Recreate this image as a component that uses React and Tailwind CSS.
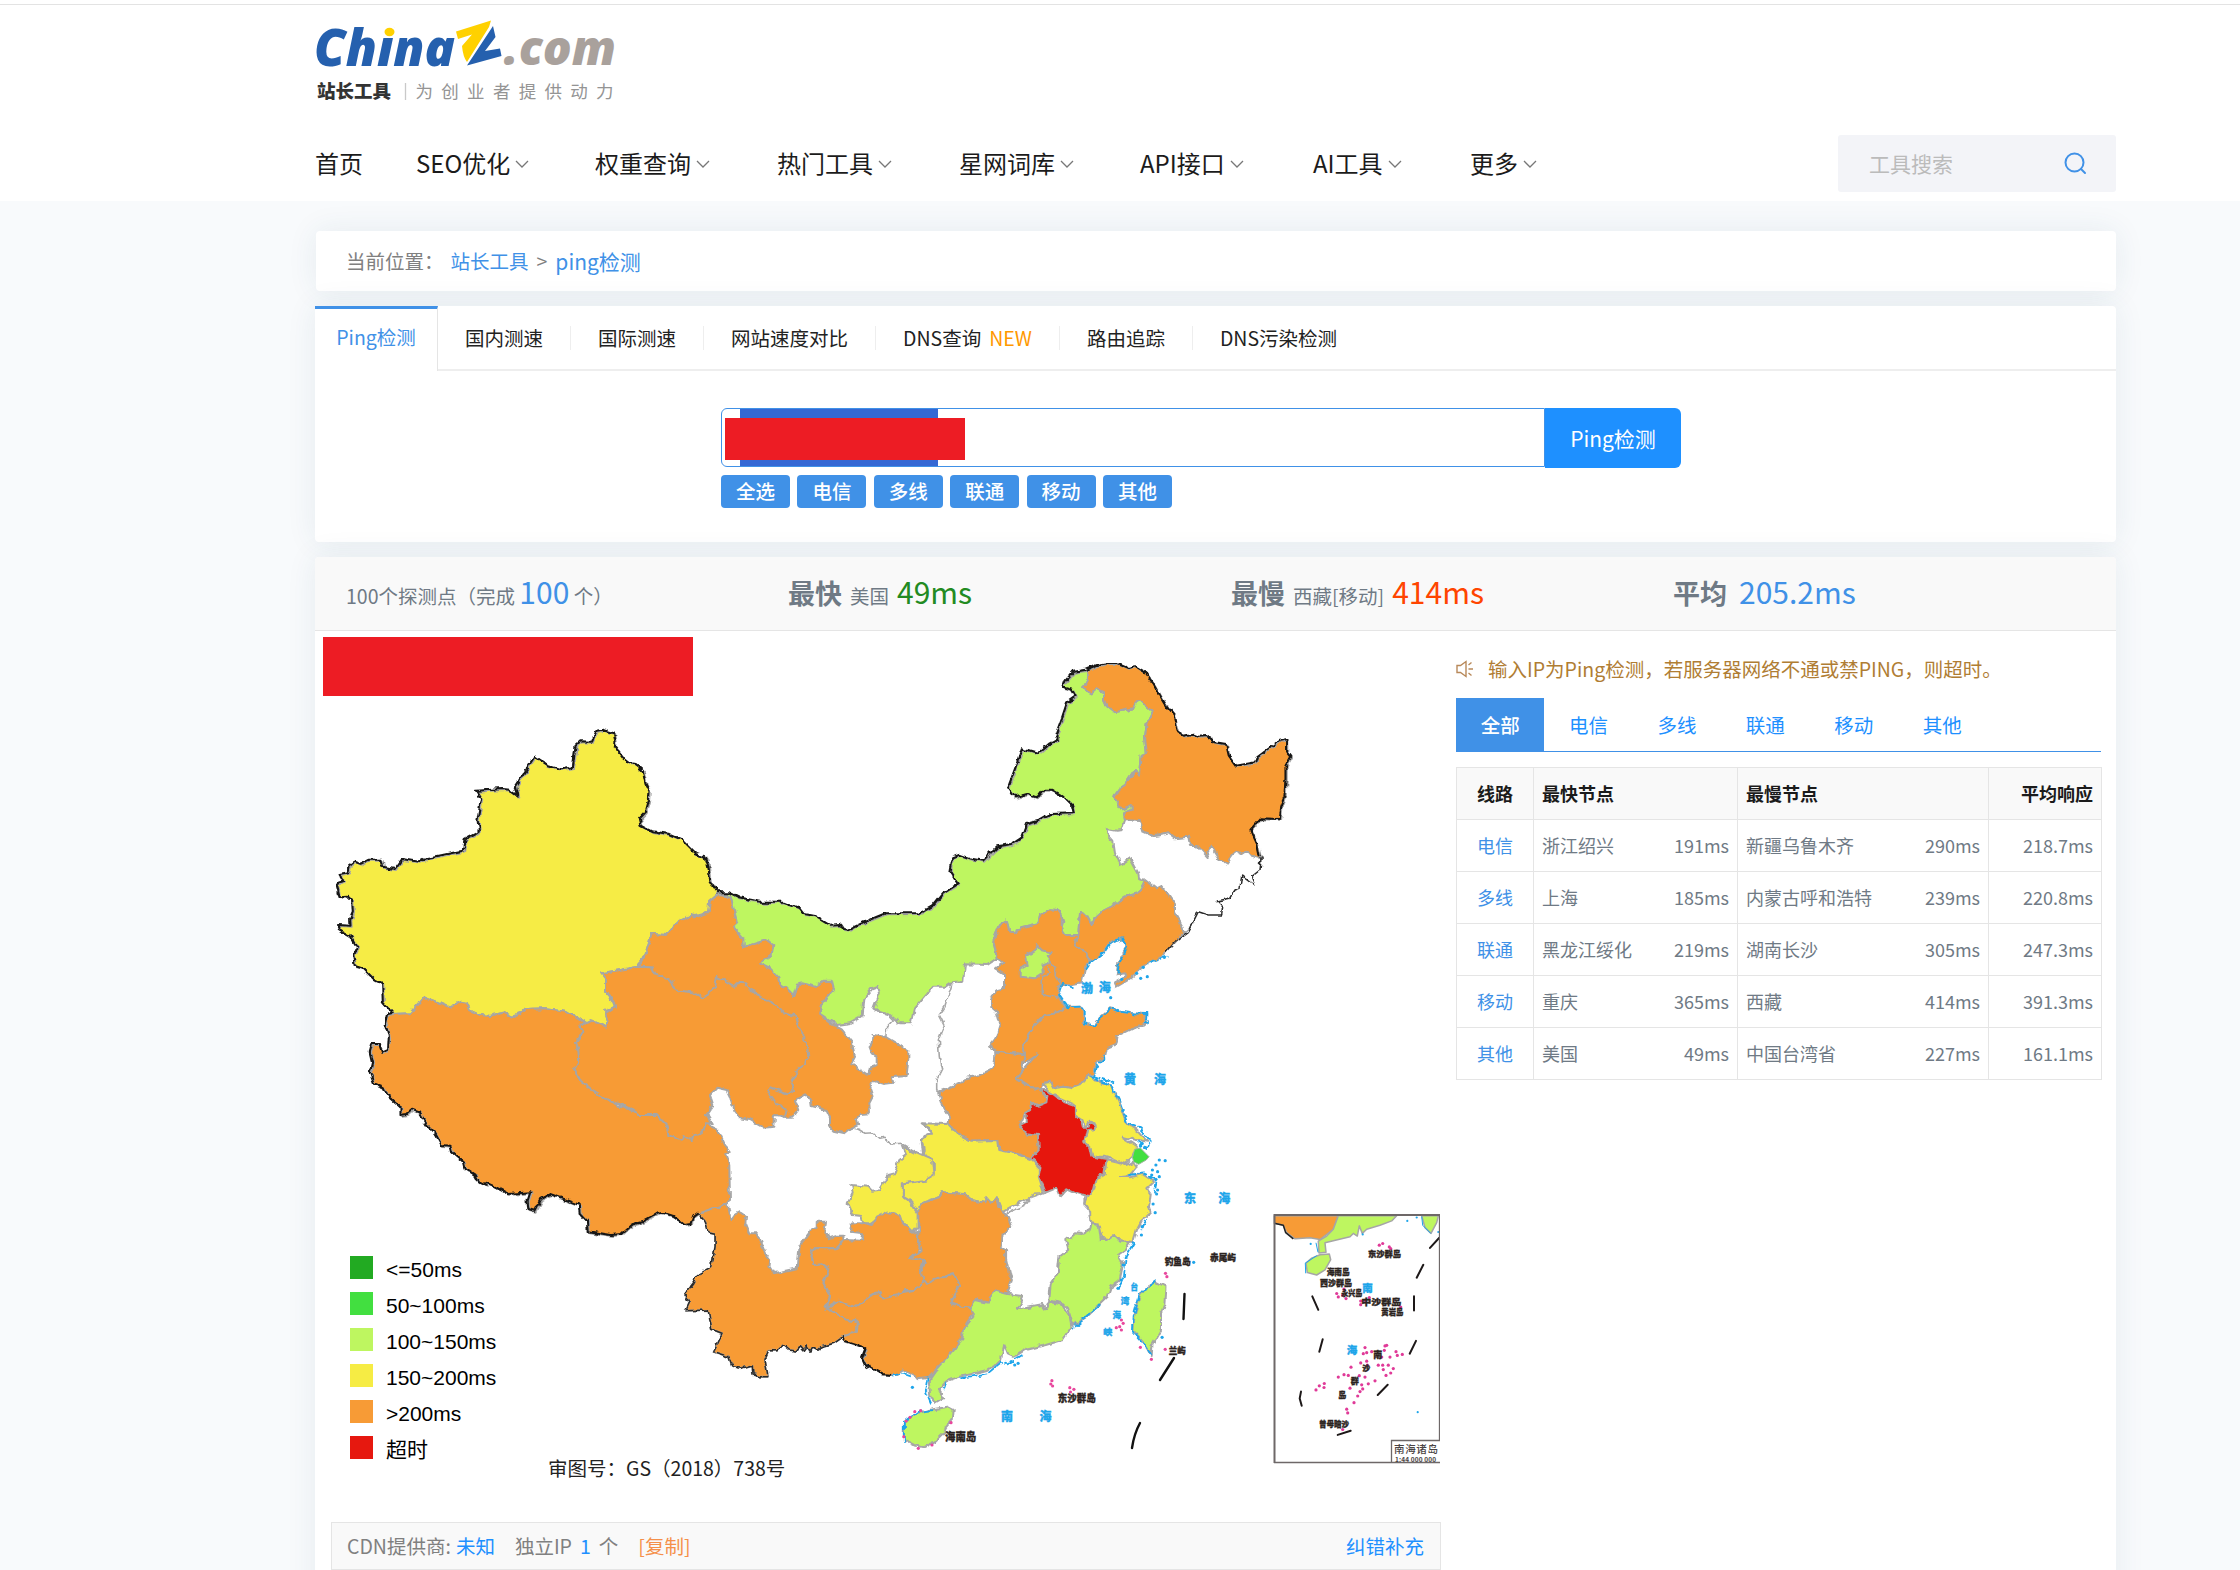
import React from "react";

/* ---------- map geometry ---------- */
// Each survey sheet: origin x, origin y, units per pixel in x and y.
const SHEETS = {
  A: [320, 700, 3, 3],
  B: [880, 640, 3, 3],
  C: [540, 860, 3, 3],
  D: [660, 1060, 2.904, 3],
  E: [320, 1180, 2.529, 3],
  F: [1120, 1040, 3, 2.958],
};
const at = (s, x, y) => {
  const [ox, oy, kx, ky] = SHEETS[s];
  return [+(ox + x / kx).toFixed(1), +(oy + y / ky).toFixed(1)];
};
const line = (...parts) => {
  const out = [];
  parts.forEach((p) => {
    const s = p[0];
    p.slice(1).trim().split(/\s+/).forEach((q) => {
      const [x, y] = q.split(",").map(Number);
      out.push(at(s, x, y).join(","));
    });
  });
  return out.join(" ");
};

const XJ_N = "A220,942 192,910 190,852 165,840 130,805 108,798 103,770 115,745 95,710 60,690 55,678 95,680 94,660 102,640 100,605 85,590 62,592 53,555 70,550 62,525 88,520 92,500 108,488 125,494 150,482 188,482 193,503 228,510 250,480 300,488 320,478 360,470 432,455 438,420 470,403 480,395 476,360 487,300 472,275 550,270 570,272 595,290 588,262 648,172 685,197 728,211 762,205 770,140 785,127 820,128 833,95 850,92 885,103 890,125 888,145 915,180 930,192 948,195 972,215 980,255 992,280 990,305 980,340 963,358 968,380 1000,397 1050,405 1085,420 1130,465 1160,475 1168,500 1175,548 1195,578";
const XJ_S = "A1167,602 1165,638 1128,648 1113,645 1075,668 1040,705 995,703 975,768 957,790 957,800 845,820 855,835 855,875 880,905 885,920 855,933 863,960 858,982 815,962 795,968";
const XJ_T = "A795,968 740,933 680,925 615,927 600,943 575,950 550,938 510,948 480,945 450,930 440,908 425,905 390,922 345,903 312,890 270,940 220,942";
const TB_TOP = "A220,942 270,940 312,890 345,903 390,922 425,905 440,908 450,930 480,945 510,948 550,938 575,950 600,943 615,927 680,925 740,933 795,968";
const TB_E = "A778,980 790,990 770,1020 772,1050 780,1053 778,1100 763,1103 775,1133 810,1165 860,1195 890,1217 915,1220 955,1245 1010,1245 1035,1270 1048,1305 1070,1310 1087,1320 1098,1300 1115,1320 1118,1298 1145,1300 1155,1270 1195,1290 1215,1335 1230,1355 1215,1360 1228,1395 1230,1500";
const TB_E2 = "D197,430 182,435 175,440 170,485 150,485 140,475 113,460";
const TB_S = ["D113,460 100,470 92,495 75,498 40,470 8,460", "E880,104 860,100 840,115 820,128 790,137 765,165 740,168 680,157 678,125 662,105 660,78 620,60 585,45 560,60 545,95 530,90 528,65 535,40 480,45 440,20 420,10", "A500,1460 480,1450 470,1430 440,1410 435,1390 400,1360 395,1340 368,1338 350,1305 325,1280 300,1240 280,1232 265,1245 245,1248 245,1225 205,1190 195,1165 165,1153 153,1120 160,1090 153,1060 160,1035 182,1035 190,1058 208,1050 210,1015 200,980 208,945 220,942"];
const YN_N = "D197,430 205,480 225,452 250,470 248,490 260,520 280,520 305,580 320,600 318,620 330,640 385,628 400,625 405,560 435,520 440,505 455,500 455,485 485,485 480,515 490,535 512,527 530,527 530,540";
const YN_GZ = "D530,540 515,565 445,565 440,590 445,612 470,610 490,625 475,670 495,705 480,745";
const YN_GX = "D480,745 520,760 545,780 575,785 572,815 530,832";
const YN_S = "D530,832 505,850 470,860 460,870 440,865 435,873 425,858 415,872 405,860 395,873 375,870 358,855 340,872 315,872 305,895 313,950 290,950 270,945 268,915 235,925 210,920 200,890 155,875 180,820 150,808 145,780 140,750 75,752 85,730 70,705 100,665 115,640 150,620 160,560 160,520 140,515 130,480 113,460";
const GX_S = "D530,832 540,845 570,855 600,868 590,895 600,918 650,945 672,947";
const IM_N = ["C535,100 570,100 600,115 665,128 735,128 783,147 797,165 825,170 870,197 905,195 915,210 930,212 985,185 1040,163 1145,162 1180,142 1210,105", "B237,735 212,695 220,655 240,647 270,658 312,665 355,622 400,615 430,595 445,555 480,545 515,525 585,523 580,500 550,470 520,452 490,452 472,475 445,465 408,475 388,445 410,385 430,328 478,342 510,315 540,298 530,288 550,235 565,190 590,172 580,152 553,145 560,125 583,98 620,92"];
const HL_W = "B620,98 625,115 610,145 635,160 650,147 672,158 672,178 685,205 700,217 760,205 770,183 780,183 818,215 800,250 795,290 800,338 785,345 780,410 765,390 735,435 720,445 700,472 725,508 755,496 755,508 732,520 735,538";
const HL_N = "B620,92 655,78 690,72 715,72 750,87 770,82 800,100 825,135 850,180 865,205 885,230 898,280 915,290 945,284 960,290 980,288 1010,310 1042,315 1050,350 1072,380 1130,370 1135,355 1175,325 1200,305 1225,300 1225,335 1237,350 1220,380 1220,420 1217,470 1205,500 1200,540 1145,538 1115,572 1135,615 1143,655";
const HL_S = "B1143,658 1115,650 1100,632 1085,642 1072,635 1060,645 1040,672 1020,660 995,620 980,648 950,615 930,615 925,590 885,595 865,580 845,585 820,588 790,575 780,540 735,538";
const JL_W = "B735,540 725,570 710,572 680,567 682,585 700,605 705,640 722,675 750,655 775,700 778,718 790,722";
const JL_E = "B1143,655 1140,690 1115,710 1125,735 1085,705 1080,745 1065,750 1050,775 1012,783 1028,800 1025,825 985,825 955,815 940,845 922,878 885,905 860,935";
const LN_N = "B795,720 790,735 775,760 735,770 705,795 665,815 650,828 635,852 620,825 600,815 595,885";
const HB_N = "B595,885 555,885 545,860 550,845 545,830 530,810 510,808 480,825 475,850 430,860 400,880 388,878 380,842 360,855 345,890 342,915 350,955";
const IM_S = ["B350,955 325,972 255,970 250,1022 212,1028 195,1040 160,1040 105,1105 95,1150 60,1150 30,1125 0,1115", "C1003,445 1020,400 1013,378 995,385 970,415 965,470 930,490 890,495 838,460 845,430 882,390 875,362 850,362 825,380 790,370 770,375 760,405 740,385 722,380 718,355 690,325 660,310 695,285 700,255 680,240 640,252 612,260 610,235 580,200 592,190 572,110"];

const OR = "#f79b36", YE = "#f6ec44", LG = "#bef660", RED = "#e6180f", GR = "#42df40";

const REGIONS = [
  [YE, line(XJ_N, XJ_S, XJ_T)],
  [OR, line(TB_TOP, TB_E, TB_E2, ...TB_S)],
  [OR, line("C297,318 315,290 335,222 380,225 415,185 455,165 465,172 505,158 510,122 535,105 572,110 592,190 580,200 610,235 612,260 640,250 680,240 700,255 695,285 660,310 690,325 718,355 722,380 740,385 760,405 770,375 790,370 825,380 850,362 875,362 882,390 845,430 838,462 880,495 905,508 935,545 945,590 933,612 985,645 990,622 1010,615 1010,590 995,580 988,562 998,550 1000,525 1035,530 1105,572 1105,600 1100,648 1055,652 1060,668 1030,672 1000,662 988,680 998,710 988,730 990,760 960,762 950,775 955,795 935,803 915,820 880,812 870,800 870,770 860,750 815,738 812,718 798,703 765,722 775,750 760,770 735,770")],
  [OR, line("C183,340 250,328 297,320 335,322 345,343 370,350 395,365 405,388 440,395 465,398 487,412 505,400 525,385 530,350 560,365 583,380 595,368 615,370 650,405 680,420 710,435 730,460 765,468 775,500 790,515 790,545 800,550 805,590 795,600 793,615 770,630 770,640 752,660 765,690 740,703 690,685 685,700 710,735 740,750 735,770 705,765 703,800 670,803 650,792 630,780 600,775 580,750 570,710 560,690 530,683 510,705 520,735 500,765 515,790 495,790 485,820 460,822 455,840 430,825 425,843 385,825 380,795 350,765 295,765 265,742 215,725 150,685 120,660 103,625 118,610 115,570 108,545 130,515 118,495 135,488 150,480 200,500 203,480 195,460 225,440 215,415 195,395 195,355")],
  [LG, line(...IM_N, HL_W, JL_W, LN_N, HB_N, ...IM_S)],
  [OR, line(HL_N, HL_S, HL_W.split(" ").reverse().map((v, i, a) => (i === 0 ? "B" + v : v.replace("B", ""))).join(" "))],
  [OR, line("B595,885 600,815 620,825 635,852 650,828 665,815 705,795 735,770 775,760 790,735 795,718 830,745 845,738 885,795 885,820 908,860 910,880 860,935 845,950 800,970 745,1020 710,1040 705,1030 740,1010 735,1000 710,1003 715,970 742,920 728,895 690,905 670,935 632,965 620,935 583,920")],
  [OR, line("B345,890 360,855 380,842 388,878 400,880 430,860 475,850 480,825 510,808 530,810 545,830 545,860 555,885 595,885 583,920 620,935 632,965 615,985 605,1030 575,1035 540,1035 535,1065 555,1100 530,1120 495,1125 460,1160 450,1180 430,1215 435,1243 343,1235 333,1215 345,1200 360,1150 350,1115 333,1100 333,1080 345,1052 372,1045 372,1000 348,985 370,968 350,950 342,915")],
  [OR, line("D808,95 880,65 885,55 920,48 965,25 970,0", "B343,1235 435,1243 425,1290 408,1315", "D1034,55 1080,85 1105,85 1115,105 1128,120 1125,130 1100,140 1075,125 1078,150 1060,160 1045,195 1065,220 1098,225 1100,270 1078,295 1030,280 985,270 982,240 900,242 860,220 838,190 840,170 815,125")],
  [OR, line("B435,1243 430,1215 450,1180 460,1160 495,1125 530,1120 555,1100 600,1100 612,1115 612,1150 640,1158 655,1135 690,1105 720,1115 760,1120 797,1122 795,1155 760,1165 710,1190 705,1215 680,1225 675,1250 650,1270 640,1305", "D1245,45 1220,75 1195,85 1170,80 1145,88 1130,65 1113,70 1105,85 1080,85 1034,55", "B408,1315 470,1243 430,1270")],
  [LG, line("B470,915 485,930 512,937 500,950 512,965 487,975 488,1000 465,1015 422,1010 422,985 440,975 435,950 460,935")],
  [YE, line("D1113,70 1135,65 1145,85 1170,80 1195,85 1220,75 1245,45 1265,60 1310,80 1330,120 1355,190 1390,215 1415,245 1385,240 1340,230 1385,260 1372,290 1350,312 1320,300 1290,290 1255,290 1250,265 1230,250 1240,210 1265,205 1262,190 1245,185 1235,200 1225,180 1203,165 1205,135 1165,115 1130,95")],
  [YE, line("D1297,300 1330,308 1350,315 1375,305 1385,320 1365,345 1340,348 1365,352 1400,342 1435,365 1415,385 1425,400 1420,440 1425,460 1400,480 1385,510 1375,545 1340,545 1320,525 1300,540 1283,535 1270,490 1250,485 1245,450 1232,430 1240,410 1265,355 1290,345")],
  [YE, line("D760,190 838,192 860,220 900,242 982,240 985,270 1030,280 1075,297 1100,320 1100,350 1115,400 1060,420 1020,440 995,455 978,412 965,430 950,412 945,430 905,420 880,402 820,397 805,415 760,430 745,460 730,425 705,410 705,370 770,362 795,340 795,310 765,290 760,245 768,228 790,222 780,205")],
  [YE, line("D705,258 745,280 790,300 795,345 770,360 705,370 705,410 720,420 748,460 748,500 735,518 700,485 690,465 660,455 630,475 610,490 590,490 585,468 560,465 545,430 560,400 555,375 605,380 615,392 635,390 660,348 680,343 695,300 715,285")],
  [RED, line("D1105,85 1130,95 1145,105 1175,130 1205,140 1205,165 1220,180 1225,200 1245,200 1248,185 1265,195 1265,208 1240,210 1232,245 1250,265 1255,290 1297,297 1290,345 1270,350 1260,390 1235,410 1205,400 1180,388 1160,410 1150,385 1120,398 1100,345 1105,320 1078,295 1100,270 1098,225 1065,220 1045,195 1065,185 1065,160 1078,150 1075,125 1100,140 1125,130 1128,105 1115,105")],
  [OR, line(YN_N, YN_GZ, YN_GX, YN_S)],
  [OR, line("D485,745 520,722 570,740 620,700 640,695 650,715 690,700 735,690 765,665 800,655 855,640 870,675 845,735 905,742 910,760 890,790 875,840 850,880 800,930 780,950 750,955 710,930 690,945 650,945 600,918 590,895 600,868 570,855 540,845 525,832 572,815 575,785 545,780")],
  [OR, line("D530,540 587,542 590,520 555,515 560,490 590,490 615,495 630,470 660,455 695,465 700,480 735,518 748,515 750,550 760,555 750,575 730,595 765,600 760,625 765,660 755,680 735,690 715,690 690,705 650,715 640,695 620,700 570,740 520,722 485,745 495,705 475,670 490,625 470,610 445,612 440,590 445,565 515,565")],
  [OR, line("D750,440 770,425 815,410 820,397 850,400 885,402 905,420 945,430 950,412 965,430 978,412 985,440 1005,460 1020,500 995,525 992,560 1005,570 1005,600 1015,645 1022,660 1010,700 975,692 955,730 920,718 905,742 875,740 845,730 870,675 855,640 830,650 800,655 780,670 765,665 760,625 767,600 730,595 760,570 750,540")],
  [LG, line("D905,742 912,720 955,728 958,712 975,692 1010,702 1055,708 1035,750 1110,735 1120,748 1130,725 1170,735 1190,770 1195,800 1170,840 1120,855 1060,870 1030,890 1010,880 1000,855 990,900 975,915 950,930 870,950 830,965 810,990 825,1015 800,1030 785,1010 780,960 800,930 835,890 875,840 880,810 910,770")],
  [LG, line("D1265,490 1275,500 1280,540 1300,540 1320,525 1340,545 1365,545 1350,570 1330,585 1345,610 1335,660 1310,680 1300,710 1270,740 1240,770 1200,795 1185,745 1170,730 1130,722 1135,670 1155,640 1160,590 1185,570 1180,540 1205,520 1225,522 1250,505 1253,490")],
  [LG, line("D708,1090 745,1060 780,1050 835,1040 853,1050 850,1080 830,1105 825,1120 800,1145 765,1162 735,1155 708,1140")],
  [LG, line("D1440,665 1468,680 1465,730 1455,760 1455,810 1430,855 1428,888 1410,855 1375,815 1378,765 1395,705 1415,680")],
];

const GREY_LINES = [
  line("C1235,372 1215,440 1198,465 1213,495 1195,540 1198,590 1205,630 1190,660 1190,693 1200,697"),
  line("C1003,445 1020,458 1040,460 1060,480 1040,500 1037,535"),
  line("C935,803 955,808 975,820 1000,818 1020,835 1035,832 1055,852 1085,850 1115,868 1145,885 1152,870 1145,840 1160,825 1180,825 1170,805 1145,790"),
  line("B512,965 528,985 525,1005 542,1030 540,1050 530,1072 487,1060 487,1010 507,1003 505,975"),
  line("B350,955 370,968"),
  line("D1005,460 1060,435 1085,400 1115,398"),
  line("D1232,410 1232,435 1250,455 1250,490"),
  line("B910,880 945,845"),
  line("C498,0 510,15 515,65 535,100"),
];
const BLACK_LINES = [line(XJ_N), line(...TB_S), line(GX_S), line(...IM_N), line(HL_N)];
const BLACK_THIN = [line(JL_E), line(YN_S)];
const COAST = [
  line("B860,950 820,960 800,972"),
  line("B710,1000 715,970 742,920 728,895 690,905 670,935 632,965 615,990"),
  line("B578,1045 545,1032 535,1065 560,1102 600,1100 612,1115 612,1150 640,1158 655,1135 690,1105 720,1115 760,1120 797,1122 795,1150"),
  line("B675,1250 650,1275 640,1308 700,1330"),
  line("D1250,50 1310,80 1330,120 1355,190 1390,205 1420,240 1412,265 1385,245"),
  line("D1355,345 1400,340 1440,360 1435,400"),
  line("D1410,480 1395,510"),
  line("D1375,545 1350,590 1345,650 1325,685"),
  line("D1270,740 1240,765 1195,805"),
  line("D1050,885 1010,910 990,905 950,940 870,955"),
  line("D775,950 768,990 785,1030"),
  line("D672,947 700,940 730,950"),
  line("D830,965 820,992"),
  line("D706,1145 706,1088 745,1056 790,1050"),
  line("D1438,663 1412,682 1390,705 1373,768 1371,815 1410,860 1425,885"),
];
const BLUE_DOTS = "D1450,300 D1467,302 D1440,315 D1430,330 D1445,335 D1428,345 D1450,350 D1440,358 D1425,352 D1445,390 D1442,402 D1432,432 D1438,458 D1400,500 D1398,525 D1395,258 D1408,262 D1400,250 D1345,615 D1340,660 D1330,685 D1275,735 D1030,915 D1040,910 D1020,905 D733,982 D1550,607 D1458,832 B853,952 B790,982 B770,1000 B782,1015 B802,1010 B692,1073 B725,1018".split(" ");
const PINK_DOTS = "D715,1083 D726,1072 D740,1055 D757,1052 D708,1130 D750,1165 D790,1155 D845,1088 D1138,962 D1135,972 D1140,978 D1190,983 D1202,988 D1192,996 D1468,640 D1472,650 D1340,780 D1345,790 D1335,800 D1325,803 D1340,810 D1395,862 D1427,898 D1467,868".split(" ");
const INSET_PINK = "778,607 788,602 808,612 812,617 650,750 655,760 672,737 668,755 678,765 722,772 735,770 722,783 748,762 842,790 795,905 800,903 793,918 735,910 740,925 730,928 755,922 785,938 810,938 828,922 832,933 847,930 775,962 788,962 805,962 820,972 790,975 812,985 798,992 740,950 742,962 722,955 693,968 672,990 655,997 685,992 718,993 735,997 745,1017 765,1008 725,1020 690,1030 720,1040 713,1053 702,1073 680,1092 683,1103 728,1032 588,1035 598,1023 613,1016 612,1028 668,1152".split(" ");
const INSET_DASH = ["577,758 595,798", "608,885 598,922", "543,1040 539,1060 545,1082", "910,665 890,703", "882,758 882,800", "888,890 869,928", "803,1020 773,1050", "653,1168 692,1156", "958,585 930,615"];

const parseDot = (d) => at(d[0], ...d.slice(1).split(",").map(Number));

function Label({ s, x, y, w, size = 10, fill = "#2b2320", children }) {
  const [px, py] = at(s, x, y);
  return (
    <text x={px} y={py + size * 0.36} fontSize={size} fontWeight="900" fill={fill} stroke={fill} strokeWidth="0.35"
      textLength={w} lengthAdjust="spacingAndGlyphs" fontFamily='"Noto Sans CJK SC", sans-serif'>
      {children}
    </text>
  );
}

const BLUE = "#1ea5ea";

function ChinaMap() {
  return (
    <svg className="block h-[884px] w-[1125px]" viewBox="316 631 1125 884">
      <defs>
        <filter id="rough" x="0" y="0" width="100%" height="100%">
          <feTurbulence type="fractalNoise" baseFrequency="0.13" numOctaves="2" seed="4" result="n" />
          <feDisplacementMap in="SourceGraphic" in2="n" scale="6" xChannelSelector="R" yChannelSelector="G" />
        </filter>
        <clipPath id="inset"><rect x="1273" y="1214" width="167" height="250" /></clipPath>
      </defs>
      <g filter="url(#rough)" strokeLinejoin="round" fill="none">
        {REGIONS.map(([c, p], i) => <polygon key={i} points={p} fill={c} stroke="#a6a6a6" strokeWidth="2" />)}
        {GREY_LINES.map((p, i) => <polyline key={i} points={p} stroke="#a6a6a6" strokeWidth="1.6" />)}
        <g stroke="#141414" strokeWidth="2.1" transform="translate(-1.2 -1)">
          {BLACK_LINES.map((p, i) => <polyline key={i} points={p} />)}
        </g>
        <g stroke="#2c2c2c" strokeWidth="1.5">
          {BLACK_THIN.map((p, i) => <polyline key={i} points={p} />)}
        </g>
        <g stroke={BLUE} strokeWidth="1.8" strokeDasharray="9 1.5" transform="translate(0.8 0)">
          {COAST.map((p, i) => <polyline key={i} points={p} />)}
        </g>
      </g>
      <polygon points={line("D1372,292 1378,268 1395,264 1420,290 1412,300 1390,313 1375,305")} fill={GR} stroke="#9fb59f" strokeWidth="1" />
      {BLUE_DOTS.map((d, i) => { const [x, y] = parseDot(d); return <circle key={i} cx={x} cy={y} r="1.6" fill={BLUE} />; })}
      {PINK_DOTS.map((d, i) => { const [x, y] = parseDot(d); return <circle key={i} cx={x} cy={y} r="1.6" fill="#e8479d" />; })}
      <g stroke="#111" strokeWidth="2.4" strokeLinecap="round">
        <path d="M1184.500 1294L1183.500 1319M1174 1358L1160 1380M1140 1423Q1134 1434 1132 1448" fill="none" />
      </g>
      <Label s="B" x={603} y={1045} size={12} w={12} fill={BLUE}>渤</Label>
      <Label s="B" x={656} y={1043} size={12} w={12} fill={BLUE}>海</Label>
      <Label s="F" x={12} y={117} size={12} w={12} fill={BLUE}>黄</Label>
      <Label s="F" x={102} y={117} size={12} w={12} fill={BLUE}>海</Label>
      <Label s="F" x={192} y={468} size={12} w={12} fill={BLUE}>东</Label>
      <Label s="F" x={295} y={468} size={12} w={12} fill={BLUE}>海</Label>
      <Label s="D" x={990} y={1071} size={12} w={12} fill={BLUE}>南</Label>
      <Label s="D" x={1102} y={1071} size={12} w={12} fill={BLUE}>海</Label>
      <Label s="D" x={1366} y={683} size={7.5} w={7.5} fill={BLUE}>台</Label>
      <Label s="D" x={1338} y={722} size={8} w={8.5} fill={BLUE}>湾</Label>
      <Label s="D" x={1314} y={765} size={8} w={8.5} fill={BLUE}>海</Label>
      <Label s="D" x={1287} y={817} size={8} w={9} fill={BLUE}>峡</Label>
      <Label s="F" x={134} y={656} size={9} w={26}>钓鱼岛</Label>
      <Label s="F" x={270} y={645} size={9} w={26}>赤尾屿</Label>
      <Label s="F" x={146} y={920} size={9} w={17}>兰屿</Label>
      <Label s="D" x={1155} y={1016} size={10} w={38}>东沙群岛</Label>
      <Label s="D" x={828} y={1130} size={11} w={31}>海南岛</Label>

      <g clipPath="url(#inset)">
        <g strokeLinejoin="round">
          <polygon points={line("F463,520 655,520 640,560 600,590 570,585 525,588 500,570 490,548 463,542")} fill={OR} stroke="#a6a6a6" strokeWidth="1.5" />
          <polyline points={line("F463,542 490,548 497,570 520,588")} fill="none" stroke="#222" strokeWidth="1.5" />
          <polygon points={line("F655,520 830,520 815,535 780,548 740,560 727,572 718,550 712,580 700,572 690,582 615,600 618,628 597,630 595,595 620,580 640,560")} fill={LG} stroke="#a6a6a6" strokeWidth="1.5" />
          <polygon points={line("F558,660 575,645 600,635 628,633 632,650 615,680 590,695 562,688")} fill={LG} stroke="#a6a6a6" strokeWidth="1.5" />
          <polyline points={line("F557,690 556,660 590,638")} fill="none" stroke={BLUE} strokeWidth="1" />
          <polyline points={line("F594,628 588,600")} fill="none" stroke={BLUE} strokeWidth="1" />
          <polygon points={line("F905,520 955,520 950,540 933,572 915,555")} fill={LG} stroke="#a6a6a6" strokeWidth="1.5" />
          <polyline points={line("F905,522 908,548 932,572")} fill="none" stroke={BLUE} strokeWidth="1" />
        </g>
        {["572,603", "728,575", "890,525", "955,568", "893,1101", "862,535"].map((d, i) => { const [x, y] = parseDot("F" + d); return <circle key={i} cx={x} cy={y} r="1.1" fill={BLUE} />; })}
        {INSET_DASH.map((d, i) => <polyline key={i} points={line("F" + d)} fill="none" stroke="#1d1818" strokeWidth="2" strokeLinecap="round" />)}
        {INSET_PINK.map((d, i) => { const [x, y] = parseDot("F" + d); return <circle key={i} cx={x} cy={y} r="1.6" fill="#e03a98" />; })}
        <Label s="F" x={744} y={632} size={8.5} w={33}>东沙群岛</Label>
        <Label s="F" x={620} y={686} size={8} w={23}>海南岛</Label>
        <Label s="F" x={600} y={720} size={8.5} w={32}>西沙群岛</Label>
        <Label s="F" x={664} y={748} size={8} w={21}>永兴岛</Label>
        <Label s="F" x={724} y={776} size={8.5} w={40}>中沙群岛</Label>
        <Label s="F" x={784} y={806} size={8} w={22}>黄岩岛</Label>
        <Label s="F" x={727} y={735} size={10.5} w={10.5} fill={BLUE}>南</Label>
        <Label s="F" x={680} y={919} size={10.5} w={10.5} fill={BLUE}>海</Label>
        <Label s="F" x={760} y={932} size={9} w={9}>南</Label>
        <Label s="F" x={727} y={971} size={8} w={8}>沙</Label>
        <Label s="F" x={692} y={1010} size={8} w={8}>群</Label>
        <Label s="F" x={655} y={1050} size={8} w={8}>岛</Label>
        <Label s="F" x={597} y={1136} size={8} w={30}>曾母暗沙</Label>
        <path d="M1274.500 1463V1215H1440" fill="none" stroke="#6e6868" strokeWidth="2" />
        <path d="M1274 1462.500H1440M1391.500 1462V1440.500H1440M1439.500 1215V1440" fill="none" stroke="#6e6868" strokeWidth="1.3" />
        <g fontFamily='"Noto Sans CJK SC", sans-serif' fill="#4a4444">
          <text x="1394" y="1453" fontSize="10.5" fontWeight="500" textLength="44">南海诸岛</text>
          <text x="1395" y="1461.500" fontSize="6.5" fontWeight="700" textLength="41">1:44 000 000</text>
        </g>
      </g>
    </svg>
  );
}

/* ---------- page pieces ---------- */
function Logo() {
  return (
    <svg className="block h-[92px] w-[320px] overflow-visible" viewBox="310 14 320 92">
      <g fontFamily='"Open Sans", sans-serif' fontStyle="italic" fontWeight="800">
        <text x="314" y="66" fontSize="51" fill="#2560ae" textLength="141" lengthAdjust="spacingAndGlyphs">China</text>
        <text x="504" y="65" fontSize="48" fontWeight="800" fill="#a9a19c" textLength="112" lengthAdjust="spacingAndGlyphs">.com</text>
      </g>
      <circle cx="389.500" cy="31" r="6.500" fill="#fff" />
      <ellipse cx="389.500" cy="32" rx="5" ry="4.200" fill="#ffd100" />
      <path d="M456 31.500L491 20.500L489 27L467 62Q463 57 462 46L472 34.500L458 39Z" fill="#ffd100" />
      <path d="M493 26L495.500 37L485 51L500 48.500L501.500 56L467 65.500Z" fill="#2560ae" />
      <g fontFamily='"Noto Sans CJK SC", sans-serif'>
        <text x="317" y="98" fontSize="18.500" fontWeight="900" fill="#333" textLength="74" lengthAdjust="spacingAndGlyphs">站长工具</text>
        <g fontSize="17.500" fill="#949494">
          {"为创业者提供动力".split("").map((c, i) => <text key={i} x={415.5 + i * 25.8} y="98">{c}</text>)}
        </g>
      </g>
      <path d="M405.500 83V100" stroke="#c9c9c9" strokeWidth="1.300" />
    </svg>
  );
}

function Chevron() {
  return (
    <svg className="ml-[5px] mt-[2px] h-3 w-[14px]" viewBox="0 0 14 12" fill="none" stroke="#777" strokeWidth="1.300">
      <path d="M1 3L7 9L13 3" />
    </svg>
  );
}

const NAV = [
  ["首页", "w-[101px]", false],
  ["SEO优化", "w-[179px]", true],
  ["权重查询", "w-[182px]", true],
  ["热门工具", "w-[182px]", true],
  ["星网词库", "w-[181px]", true],
  ["API接口", "w-[173px]", true],
  ["AI工具", "w-[157px]", true],
  ["更多", "w-[100px]", true],
];

const ROWS = [
  ["电信", "浙江绍兴", "191ms", "新疆乌鲁木齐", "290ms", "218.7ms"],
  ["多线", "上海", "185ms", "内蒙古呼和浩特", "239ms", "220.8ms"],
  ["联通", "黑龙江绥化", "219ms", "湖南长沙", "305ms", "247.3ms"],
  ["移动", "重庆", "365ms", "西藏", "414ms", "391.3ms"],
  ["其他", "美国", "49ms", "中国台湾省", "227ms", "161.1ms"],
];

const LEGEND = [
  ["bg-[#22aa22]", "<=50ms"],
  ["bg-[#42df40]", "50~100ms"],
  ["bg-[#bef660]", "100~150ms"],
  ["bg-[#f6ec44]", "150~200ms"],
  ["bg-[#f79b36]", ">200ms"],
  ["bg-[#e6180f]", "超时"],
];

const SHADOW = "shadow-[0_0_30px_rgba(30,80,110,0.085)]";

export default function App() {
  return (
    <div className="h-[1570px] w-[2240px] overflow-hidden bg-[#f8fafc] font-['Noto_Sans_CJK_SC',sans-serif] text-[19.5px] leading-none text-[#222]">
      <header className="h-[201px] bg-white pt-1">
        <div className="h-px bg-[#e3e3e3]" />
        <div className="ml-[310px] mt-[9px]"><Logo /></div>
        <div className="ml-[314px] mt-[29px] flex h-[57px] w-[1802px] items-center pl-px">
          <nav className="flex flex-1 items-center pb-px text-2xl leading-none text-[#1b1b1b]">
            {NAV.map(([t, w, c]) => (
              <div key={t} className={"flex items-center whitespace-nowrap " + w}>{t}{c && <Chevron />}</div>
            ))}
          </nav>
          <div className="flex h-[57px] w-[278px] items-center justify-between rounded-[3px] bg-[#f3f4f8] pb-px pl-[31px] pr-[29px] text-[21px] text-[#bbb]">
            <span>工具搜索</span>
            <svg className="h-[23px] w-[23px]" viewBox="0 0 23 23" fill="none" stroke="#4091e7" strokeWidth="2" strokeLinecap="round">
              <circle cx="10.500" cy="10.500" r="9" /><path d="M17 17L21 21" />
            </svg>
          </div>
        </div>
      </header>

      <main className="ml-[315px] flex w-[1800px] flex-col gap-[15px] pt-[30px]">
        <div className={"mr-[-1px] ml-px flex h-[60px] items-center rounded bg-white pl-[30px] text-[#808080] " + SHADOW}>
          <span>当前位置：</span>
          <span className="ml-[7px] text-[#4091e7]">站长工具</span>
          <span className="mx-2">&gt;</span>
          <span className="text-[21px] text-[#4091e7]">ping检测</span>
        </div>

        <section className={"mr-[-1px] h-[236px] rounded bg-white " + SHADOW}>
          <div className="flex h-[65px]">
            <div className="flex w-[123px] items-center justify-center border-r border-t-[3px] border-r-[#e5e5e5] border-t-[#4091e7] pb-[7px] text-[#4091e7]">Ping检测</div>
            <div className="flex flex-1 items-center border-b-2 border-[#eeeeee] pt-px">
              {["国内测速", "国际测速", "网站速度对比", "DNS查询", "路由追踪", "DNS污染检测"].map((t, i) => (
                <div key={t} className={"flex h-6 items-center whitespace-nowrap px-[27px] " + (i < 5 ? "border-r border-[#eee]" : "")}>
                  {t}{t === "DNS查询" && <span className="ml-2 text-[#ff9800]">NEW</span>}
                </div>
              ))}
            </div>
          </div>
          <div className="ml-[406px] mt-[37px] flex h-[60px] w-[960px]">
            <div className="relative h-[59px] flex-1 rounded-l-md border border-[#4091e7] bg-white">
              <div className="absolute left-[18px] top-0 h-[57px] w-[198px] bg-[#3568d4]" />
              <div className="absolute left-[3px] top-[9px] h-[42px] w-[240px] bg-[#ed1c24]" />
            </div>
            <div className="flex w-[136px] items-center justify-center rounded-r-md bg-[#1e90ff] pt-px text-[21px] text-white">Ping检测</div>
          </div>
          <div className="ml-[406px] mt-[7px] flex gap-[7.4px]">
            {["全选", "电信", "多线", "联通", "移动", "其他"].map((t) => (
              <div key={t} className="flex h-[33px] w-[69px] items-center justify-center rounded bg-[#4091e7] pb-[2px] font-medium text-white">{t}</div>
            ))}
          </div>
        </section>

        <section className={"mr-[-1px] h-[1100px] rounded bg-white " + SHADOW}>
          <div className="flex h-[74px] items-baseline whitespace-nowrap rounded-t border-b border-[#e5e5e5] bg-[#f9f9f9] pl-[31px] pt-[19px] text-[#6f7a85]">
            <div className="w-[442px]">100个探测点（完成 <span className="text-[30px] text-[#4091e7]">100</span> 个）</div>
            <div className="w-[443px]"><b className="text-[27px]">最快</b><span className="mx-2">美国</span><span className="text-[30px] text-[#228b22]">49ms</span></div>
            <div className="w-[442px]"><b className="text-[27px]">最慢</b><span className="mx-2">西藏[移动]</span><span className="text-[30px] text-[#ff4500]">414ms</span></div>
            <div><b className="mr-3 text-[27px]">平均</b><span className="text-[30px] text-[#4091e7]">205.2ms</span></div>
          </div>

          <div className="flex">
            <div className="w-[1141px]">
              <div className="relative ml-px">
                <ChinaMap />
                <div className="absolute left-[7px] top-[6px] h-[59px] w-[370px] bg-[#ed1c24]" />
                <div className="absolute left-[34px] top-[625px] flex flex-col gap-[13px]">
                  {LEGEND.map(([c, t]) => (
                    <div key={t} className="flex h-[23px] items-center gap-[13px] font-['Liberation_Sans','Noto_Sans_CJK_SC',sans-serif] text-[21px] text-black">
                      <span className={"h-[23px] w-[23px] " + c} /><span className="pt-[3px]">{t}</span>
                    </div>
                  ))}
                </div>
                <div className="absolute left-[232px] top-[827px] whitespace-nowrap">审图号：GS（2018）738号</div>
              </div>
              <div className="ml-4 mt-[7px] flex h-12 w-[1110px] items-center border border-[#e5e5e5] bg-[#f9f9f9] pl-[15px] pr-4 text-[#808080]">
                <span>CDN提供商:</span>
                <span className="ml-[5px] text-[#1e90ff]">未知</span>
                <span className="ml-5">独立IP</span>
                <span className="ml-2 text-[#1e90ff]">1</span>
                <span className="ml-2">个</span>
                <span className="ml-5 text-[#f5904a]">[复制]</span>
                <span className="ml-auto text-[#1e90ff]">纠错补充</span>
              </div>
            </div>

            <div className="w-[645px] pt-[28px]">
              <div className="flex h-5 items-center text-[#b07d33]">
                <svg className="mr-[14px] h-[18px] w-[18px]" viewBox="0 0 18 18" fill="none" stroke="#b8895a" strokeWidth="1.400">
                  <path d="M1 5.500H4.500L10 1.500V16.500L4.500 12.500H1ZM12.500 5L15.500 2.500M12.500 9H17M12.500 13L15.500 15.500" />
                </svg>
                <span className="whitespace-nowrap">输入IP为Ping检测，若服务器网络不通或禁PING，则超时。</span>
              </div>
              <div className="mt-[19px] flex h-[54px] border-b border-[#4091e7]">
                {["全部", "电信", "多线", "联通", "移动", "其他"].map((t, i) => (
                  <div key={t} className={"flex w-[88.4px] items-center justify-center " + (i === 0 ? "bg-[#4091e7] font-medium text-white" : "text-[#1e90ff]")}>{t}</div>
                ))}
              </div>
              <table className="mt-[15px] w-[646px] table-fixed border-collapse text-lg leading-none text-[#6f7a85]">
                <colgroup><col className="w-[77px]" /><col className="w-[204px]" /><col className="w-[251px]" /><col className="w-[113px]" /></colgroup>
                <thead>
                  <tr className="h-[52px] bg-[#f9f9f9] text-[#1b1b1b]">
                    <th className="border border-[#e5e5e5] pb-[2px]">线路</th>
                    <th className="border border-[#e5e5e5] px-2 pb-[2px] text-left">最快节点</th>
                    <th className="border border-[#e5e5e5] px-2 pb-[2px] text-left">最慢节点</th>
                    <th className="border border-[#e5e5e5] px-2 pb-[2px] text-right">平均响应</th>
                  </tr>
                </thead>
                <tbody>
                  {ROWS.map((r) => (
                    <tr key={r[0]} className="h-[52px]">
                      <td className="border border-[#e5e5e5] pb-[2px] text-center text-[#4091e7]">{r[0]}</td>
                      <td className="border border-[#e5e5e5] px-2 pb-[2px]"><div className="flex justify-between"><span>{r[1]}</span><span>{r[2]}</span></div></td>
                      <td className="border border-[#e5e5e5] px-2 pb-[2px]"><div className="flex justify-between"><span>{r[3]}</span><span>{r[4]}</span></div></td>
                      <td className="border border-[#e5e5e5] px-2 pb-[2px] text-right">{r[5]}</td>
                    </tr>
                  ))}
                </tbody>
              </table>
            </div>
          </div>
        </section>
      </main>
    </div>
  );
}
